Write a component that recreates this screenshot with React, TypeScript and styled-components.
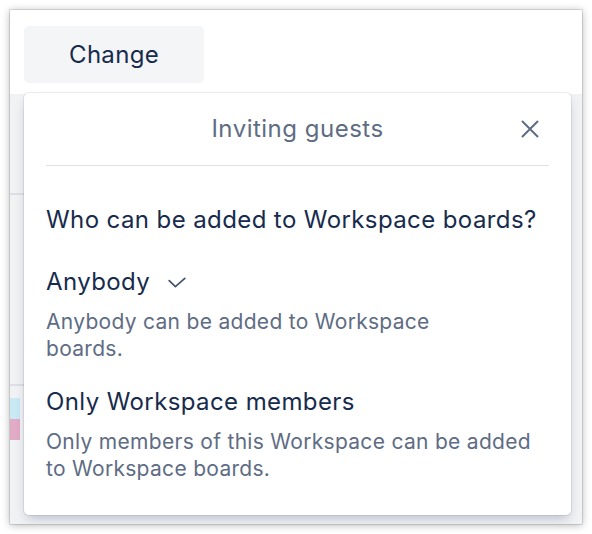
import * as React from 'react';
import styled, { createGlobalStyle } from 'styled-components';

const GlobalStyle = createGlobalStyle`
	html, body {
		margin: 0;
		padding: 0;
		background: #ffffff;
	}
	body {
		font-family: Inter, "Noto Sans", "Liberation Sans", sans-serif;
		-webkit-font-smoothing: antialiased;
	}
`;

const Stage = styled.div`
	width: 592px;
	height: 534px;
	padding: 10px;
	box-sizing: border-box;
`;

const Window = styled.div`
	position: relative;
	width: 572px;
	height: 514px;
	background: #ffffff;
	box-shadow: 0 0 0 1px rgba(0, 0, 0, 0.1), 0 1px 8px rgba(0, 0, 0, 0.3);
	overflow: hidden;
	padding: 16px 0 0 14px;
	box-sizing: border-box;
`;

/* the board page that lies under the popover */
const PageBehind = styled.div`
	position: absolute;
	left: 0;
	right: 0;
	top: 84px;
	bottom: 0;
	background: #f1f2f4;
`;

const BehindRule = styled.div<{ $top: number }>`
	position: absolute;
	left: 0;
	width: 16px;
	top: ${(p) => p.$top}px;
	height: 2px;
	background: #dcdfe5;
`;

const BehindThumb = styled.div<{ $top: number; $color: string }>`
	position: absolute;
	left: 0;
	width: 10px;
	top: ${(p) => p.$top}px;
	height: 21px;
	background: ${(p) => p.$color};
`;

const ChangeButton = styled.button`
	display: flex;
	align-items: center;
	justify-content: center;
	width: 180px;
	height: 57px;
	border: none;
	border-radius: 5px;
	background: #f4f5f7;
	color: #172b4d;
	font-family: inherit;
	font-size: 24px;
	letter-spacing: 0.3px;
	padding: 0;
	cursor: pointer;
`;

const Popover = styled.section`
	position: absolute;
	left: 14px;
	top: 83px;
	width: 547px;
	height: 422px;
	background: #ffffff;
	border-radius: 5px;
	box-shadow: 0 6px 12px -3px rgba(9, 30, 66, 0.25), 0 0 0 1px rgba(9, 30, 66, 0.08);
	padding: 0 22px;
	box-sizing: border-box;
	display: flex;
	flex-direction: column;
`;

const Header = styled.header`
	position: relative;
	height: 73px;
	display: flex;
	align-items: center;
	justify-content: center;
	border-bottom: 1.5px solid #dfe1e6;
	box-sizing: border-box;
`;

const Title = styled.h2`
	margin: 0;
	font-size: 24px;
	font-weight: 400;
	letter-spacing: 0.5px;
	color: #5e6c84;
	line-height: 30px;
`;

const CloseButton = styled.button`
	position: absolute;
	right: 7px;
	top: 50%;
	transform: translateY(-50%);
	width: 24px;
	height: 24px;
	border: none;
	background: transparent;
	padding: 0;
	display: flex;
	align-items: center;
	justify-content: center;
	color: #5e6c84;
	cursor: pointer;
`;

const Question = styled.h3`
	margin: 39px 0 0;
	font-size: 24px;
	font-weight: 400;
	letter-spacing: 0.4px;
	line-height: 30px;
	color: #172b4d;
`;

const Option = styled.div<{ $first?: boolean }>`
	margin-top: ${(p) => (p.$first ? 32 : 25)}px;
	display: flex;
	flex-direction: column;
	gap: 11px;
`;

const OptionName = styled.div`
	display: flex;
	align-items: center;
	gap: 18px;
	font-size: 24px;
	letter-spacing: 0.4px;
	line-height: 30px;
	color: #172b4d;
`;

const OptionHint = styled.p<{ $maxWidth?: number }>`
	margin: 0;
	font-size: 21px;
	letter-spacing: 0.3px;
	line-height: 27px;
	color: #5e6c84;
	max-width: ${(p) => (p.$maxWidth ? `${p.$maxWidth}px` : 'none')};
`;

const Check = () => (
	<svg width="18" height="11" viewBox="0 0 18 11" fill="none">
		<path d="M1.2 3.6L7.4 9.6L16.8 1.4" stroke="#42526e" strokeWidth="1.7" strokeLinecap="round" strokeLinejoin="round" />
	</svg>
);

const CloseIcon = () => (
	<svg width="18" height="18" viewBox="0 0 18 18" fill="none">
		<path d="M1.5 1.5L16.5 16.5M16.5 1.5L1.5 16.5" stroke="currentColor" strokeWidth="2" strokeLinecap="round" />
	</svg>
);

const App: React.FC = () => {
	return (
		<>
			<GlobalStyle />
			<Stage>
				<Window>
					<PageBehind>
						<BehindRule $top={99} />
						<BehindRule $top={290} />
						<BehindThumb $top={304} $color="#c9e9f5" />
						<BehindThumb $top={325} $color="#e2abc6" />
					</PageBehind>
					<ChangeButton>Change</ChangeButton>
					<Popover>
						<Header>
							<Title>Inviting guests</Title>
							<CloseButton aria-label="Close">
								<CloseIcon />
							</CloseButton>
						</Header>
						<Question>Who can be added to Workspace boards?</Question>
						<Option $first>
							<OptionName>
								Anybody
								<Check />
							</OptionName>
							<OptionHint $maxWidth={420}>Anybody can be added to Workspace boards.</OptionHint>
						</Option>
						<Option>
							<OptionName>Only Workspace members</OptionName>
							<OptionHint>Only members of this Workspace can be added to Workspace boards.</OptionHint>
						</Option>
					</Popover>
				</Window>
			</Stage>
		</>
	);
};

export default App;
